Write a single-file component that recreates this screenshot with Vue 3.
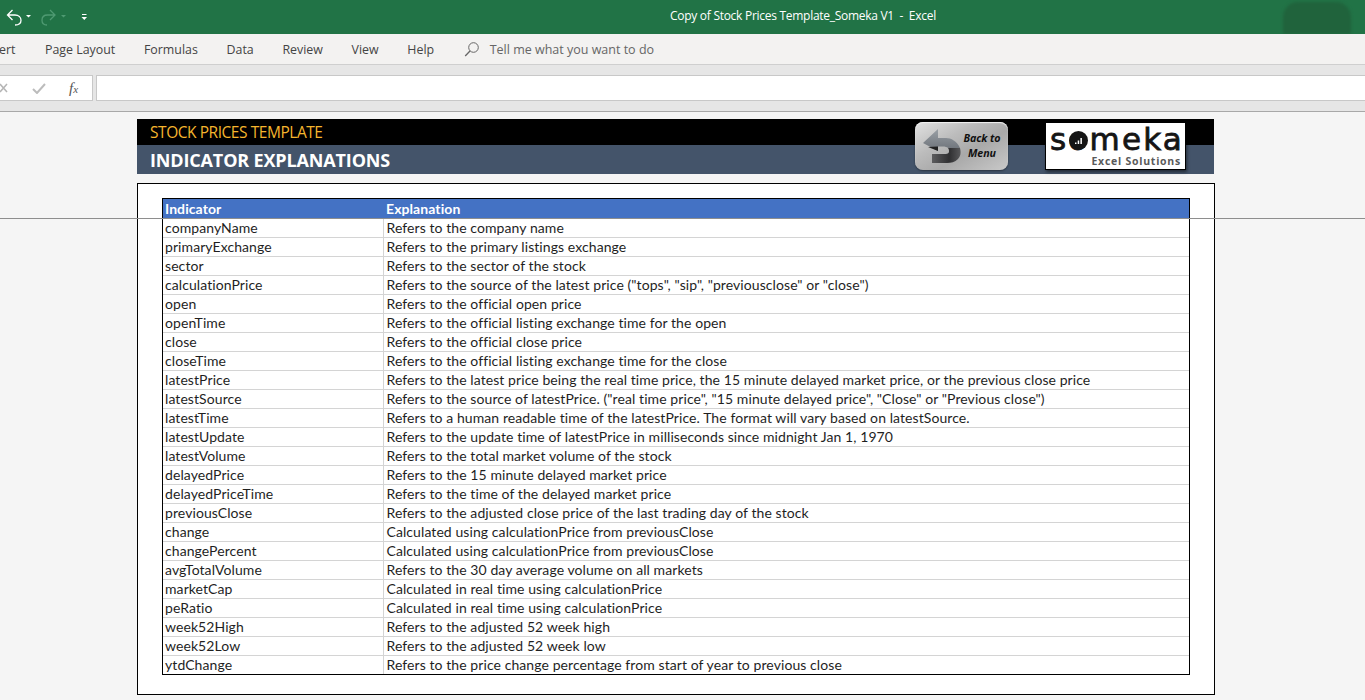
<template>
  <div class="excel">
    <!-- title bar -->
    <header class="titlebar">
      <svg class="quick" width="92" height="34" viewBox="0 0 92 34">
        <path d="M12.500 10L7.500 15l5 5M7.500 15H15c3.500 0 6 2.300 6 5.200S18.500 25 15 25" fill="none" stroke="#fff" stroke-width="1.300"/>
        <path d="M26 15h5l-2.500 2.500z" fill="#fff"/>
        <path d="M50 10l5 5-5 5M55 15h-7.500c-3.500 0-5.500 2.300-5.500 5.200S44 25 47 25" fill="none" stroke="#4f9a72" stroke-width="1.300"/>
        <path d="M61 15h5l-2.500 2.500z" fill="#4f9a72"/>
        <rect x="82" y="14" width="4.500" height="1" fill="#fff"/>
        <path d="M81.500 17h5.500l-2.700 3z" fill="#fff"/>
      </svg>
      <div class="doc-title">Copy of Stock Prices Template_Someka V1&nbsp; -&nbsp; Excel</div>
      <div class="blur-user"></div>
    </header>

    <!-- ribbon tabs -->
    <nav class="tabs">
      <span class="tab cut">ert</span>
      <span class="tab" v-for="t in tabs" :key="t">{{ t }}</span>
      <svg class="search" width="16" height="16" viewBox="0 0 16 16">
        <circle cx="9.500" cy="6.500" r="4.800" fill="none" stroke="#666" stroke-width="1"/>
        <path d="M6 10L1.200 15" stroke="#666" stroke-width="1.300"/>
      </svg>
      <span class="tell">Tell me what you want to do</span>
    </nav>

    <!-- formula bar -->
    <div class="formula">
      <div class="fx-box">
        <svg class="x" width="8" height="10" viewBox="0 0 8 10">
          <path d="M0 1l7 8M7 1L0 9" stroke="#b5b5b5" stroke-width="1.500"/>
        </svg>
        <svg class="check" width="14" height="11" viewBox="0 0 14 11">
          <path d="M1 6l4 4 8-9" fill="none" stroke="#bcbcbc" stroke-width="2"/>
        </svg>
        <span class="fx">f<small>x</small></span>
      </div>
      <div class="input"></div>
    </div>

    <!-- sheet -->
    <main class="sheet">
      <div class="freeze-line"></div>
      <div class="banner">
        <div class="banner-top">STOCK PRICES TEMPLATE</div>
        <div class="banner-sub">INDICATOR EXPLANATIONS</div>
        <div class="back-btn">
          <svg class="back-arrow" width="48" height="48" viewBox="0 0 48 48">
            <defs>
              <linearGradient id="arrowTop" x1="0" y1="0" x2="0" y2="1">
                <stop offset="0" stop-color="#9aa0a6"/>
                <stop offset="1" stop-color="#6c7178"/>
              </linearGradient>
              <linearGradient id="arrowLow" x1="0" y1="0" x2="1" y2="0">
                <stop offset="0" stop-color="#5c5c5e"/>
                <stop offset="0.6" stop-color="#2f2f31"/>
                <stop offset="1" stop-color="#58585a"/>
              </linearGradient>
            </defs>
            <path d="M8 21L23 7v9h8c5 0 11 3 14 10H33c-1-1-3-1.500-5-1.500h-5V29z" fill="url(#arrowTop)"/>
            <path d="M13 25l10 4v-4.500z" fill="#222"/>
            <path d="M45 26c1 4 1 8-2 11s-7 4-11 4H17v-9h14c3 0 4-3 2-6z" fill="url(#arrowLow)"/>
          </svg>
          <div class="back-text">Back to<br>Menu</div>
        </div>
        <div class="logo">
          <div class="logo-word">s<span class="logo-o">o<svg class="logo-bars" width="19" height="19" viewBox="0 0 19 19"><circle cx="9.500" cy="9.500" r="9.500" fill="#151515"/><path d="M6 13v-1.500h1.500V13zM8.700 13V9.500h1.500V13zM11.400 13V7h1.500v6z" fill="#fff"/></svg></span>meka</div>
          <div class="logo-sub">Excel Solutions</div>
        </div>
      </div>

      <section class="box">
        <div class="grid-wrap">
          <table class="grid">
            <colgroup>
              <col class="col-a" />
              <col />
            </colgroup>
            <thead>
              <tr>
                <th>Indicator</th>
                <th>Explanation</th>
              </tr>
            </thead>
            <tbody>
              <tr v-for="r in rows" :key="r[0]">
                <td>{{ r[0] }}</td>
                <td>{{ r[1] }}</td>
              </tr>
            </tbody>
          </table>
        </div>
      </section>
    </main>
  </div>
</template>

<script setup>
const tabs = ['Page Layout', 'Formulas', 'Data', 'Review', 'View', 'Help']

const rows = [
  ['companyName', 'Refers to the company name'],
  ['primaryExchange', 'Refers to the primary listings exchange'],
  ['sector', 'Refers to the sector of the stock'],
  ['calculationPrice', 'Refers to the source of the latest price ("tops", "sip", "previousclose" or "close")'],
  ['open', 'Refers to the official open price'],
  ['openTime', 'Refers to the official listing exchange time for the open'],
  ['close', 'Refers to the official close price'],
  ['closeTime', 'Refers to the official listing exchange time for the close'],
  ['latestPrice', 'Refers to the latest price being the real time price, the 15 minute delayed market price, or the previous close price'],
  ['latestSource', 'Refers to the source of latestPrice. ("real time price", "15 minute delayed price", "Close" or "Previous close")'],
  ['latestTime', 'Refers to a human readable time of the latestPrice. The format will vary based on latestSource.'],
  ['latestUpdate', 'Refers to the update time of latestPrice in milliseconds since midnight Jan 1, 1970'],
  ['latestVolume', 'Refers to the total market volume of the stock'],
  ['delayedPrice', 'Refers to the 15 minute delayed market price'],
  ['delayedPriceTime', 'Refers to the time of the delayed market price'],
  ['previousClose', 'Refers to the adjusted close price of the last trading day of the stock'],
  ['change', 'Calculated using calculationPrice from previousClose'],
  ['changePercent', 'Calculated using calculationPrice from previousClose'],
  ['avgTotalVolume', 'Refers to the 30 day average volume on all markets'],
  ['marketCap', 'Calculated in real time using calculationPrice'],
  ['peRatio', 'Calculated in real time using calculationPrice'],
  ['week52High', 'Refers to the adjusted 52 week high'],
  ['week52Low', 'Refers to the adjusted 52 week low'],
  ['ytdChange', 'Refers to the price change percentage from start of year to previous close']
]
</script>

<style>
html, body {
  margin: 0;
  background: #f5f5f5;
}
</style>

<style scoped>
.excel {
  width: 1365px;
  height: 700px;
  overflow: hidden;
  display: flex;
  flex-direction: column;
  font-family: "Open Sans", "Liberation Sans", sans-serif;
}

.titlebar {
  height: 34px;
  background: #217346;
  display: flex;
  align-items: center;
  position: relative;
  flex: none;
  overflow: hidden;
}

.quick {
  display: block;
}

.doc-title {
  position: absolute;
  left: 670px;
  top: 0;
  line-height: 32px;
  font-size: 12px;
  color: #fff;
  white-space: nowrap;
  letter-spacing: -0.28px;
}

.blur-user {
  position: absolute;
  right: 14px;
  top: 2px;
  width: 68px;
  height: 32px;
  border-radius: 15px 15px 0 0;
  background: #20633c;
  filter: blur(1.500px);
}

.tabs {
  height: 31px;
  flex: none;
  box-sizing: border-box;
  background: #f3f2f1;
  border-bottom: 1px solid #cfcfcf;
  display: flex;
  align-items: center;
  font-size: 12.400px;
  color: #444;
}

.tab {
  margin-left: 28.700px;
  white-space: nowrap;
}

.tab.cut {
  margin-left: 0;
  width: 16.300px;
  overflow: hidden;
  display: flex;
  justify-content: flex-start;
  text-indent: -1px;
}

.search {
  margin-left: 30px;
}

.tell {
  margin-left: 9.500px;
  font-size: 12.500px;
  color: #666;
}

.formula {
  height: 47px;
  flex: none;
  box-sizing: border-box;
  background: #e6e6e6;
  border-bottom: 1px solid #a8a8a8;
  display: flex;
  gap: 3px;
  padding-top: 10px;
}

.fx-box {
  width: 93px;
  height: 26px;
  box-sizing: border-box;
  background: #fff;
  border: 1px solid #c8c8c8;
  border-left: none;
  display: flex;
  align-items: center;
  position: relative;
}

.x {
  position: absolute;
  left: 0;
  top: 7px;
}

.check {
  position: absolute;
  left: 32px;
  top: 7px;
}

.fx {
  position: absolute;
  left: 69px;
  top: 3px;
  font-family: "Liberation Serif", serif;
  font-style: italic;
  font-size: 15px;
  line-height: 18px;
  color: #555;
}

.fx small {
  font-size: 11px;
}

.input {
  flex: 1;
  height: 26px;
  box-sizing: border-box;
  background: #fff;
  border: 1px solid #c8c8c8;
  border-right: none;
}

.sheet {
  flex: 1;
  position: relative;
  background: #f5f5f5;
  padding: 7px 0 0 137px;
}

.freeze-line {
  position: absolute;
  left: 0;
  right: 0;
  top: 106px;
  height: 1px;
  background: #8e8e8e;
  z-index: 2;
}

.banner {
  width: 1077px;
  height: 55px;
  position: relative;
}

.banner-top {
  height: 26px;
  box-sizing: border-box;
  background: #000;
  color: #f5b52e;
  font-size: 15.500px;
  line-height: 27px;
  padding-left: 13px;
  letter-spacing: -0.45px;
}

.banner-sub {
  height: 29px;
  box-sizing: border-box;
  background: #44546a;
  color: #fff;
  font-size: 18px;
  font-weight: 700;
  line-height: 30px;
  padding-left: 13px;
  letter-spacing: -0.15px;
}

.back-btn {
  position: absolute;
  left: 778px;
  top: 3px;
  width: 93px;
  height: 48px;
  box-sizing: border-box;
  border-radius: 8px;
  background: linear-gradient(150deg, #e2e2e2 0%, #bcbcbc 35%, #a9a9a9 60%, #c9c9c9 100%);
  box-shadow: 0 1px 2px rgba(0, 0, 0, 0.4), inset 0 1px 1px #f2f2f2;
  display: flex;
  align-items: center;
}

.back-arrow {
  flex: none;
  display: block;
}

.back-text {
  font-style: italic;
  font-weight: 700;
  font-size: 10.700px;
  line-height: 15px;
  text-align: center;
  color: #111;
  letter-spacing: -0.1px;
  width: 40px;
  margin-left: -1px;
}

.logo {
  position: absolute;
  left: 908px;
  top: 3px;
  width: 141px;
  height: 48px;
  box-sizing: border-box;
  background: #fff;
  border: 1px solid #000;
  box-shadow: 1px 2px 3px rgba(0, 0, 0, 0.5);
  display: flex;
  flex-direction: column;
  padding: 1px 4px 0;
}

.logo-word {
  font-family: "DejaVu Sans", sans-serif;
  font-size: 31px;
  line-height: 31px;
  height: 31px;
  color: #151515;
  letter-spacing: 2.200px;
  -webkit-text-stroke: 0.8px #151515;
  white-space: nowrap;
}

.logo-o {
  position: relative;
}

.logo-bars {
  position: absolute;
  left: 0.500px;
  top: 10px;
}

.logo-sub {
  font-weight: 700;
  font-size: 10.500px;
  line-height: 13px;
  letter-spacing: 0.750px;
  color: #5a5a5a;
  text-align: right;
}

.box {
  width: 1078px;
  height: 512px;
  box-sizing: border-box;
  margin-top: 9px;
  background: #fff;
  border: 1px solid #000;
  padding: 14px 24px 0;
}

.grid-wrap {
  width: 1028px;
  height: 477px;
  box-sizing: border-box;
  border: 1px solid #000;
  overflow: hidden;
}

.grid {
  width: 100%;
  border-collapse: collapse;
  table-layout: fixed;
  font-family: Lato, "Open Sans", sans-serif;
  font-size: 14px;
  letter-spacing: 0.08px;
  color: #1f1f1f;
}

.col-a {
  width: 220px;
}

.grid th {
  height: 19px;
  padding: 0 0 0 2px;
  background: #4472c4;
  color: #fff;
  text-align: left;
  font-weight: 700;
  line-height: 18px;
}

.grid th + th {
  padding-left: 3px;
}

.grid td {
  height: 19px;
  box-sizing: border-box;
  padding: 0 0 0 2px;
  line-height: 18px;
  border-top: 1px solid #d4d4d4;
  white-space: nowrap;
  overflow: hidden;
}

.grid td + td {
  border-left: 1px solid #d4d4d4;
  padding-left: 3px;
}
</style>
